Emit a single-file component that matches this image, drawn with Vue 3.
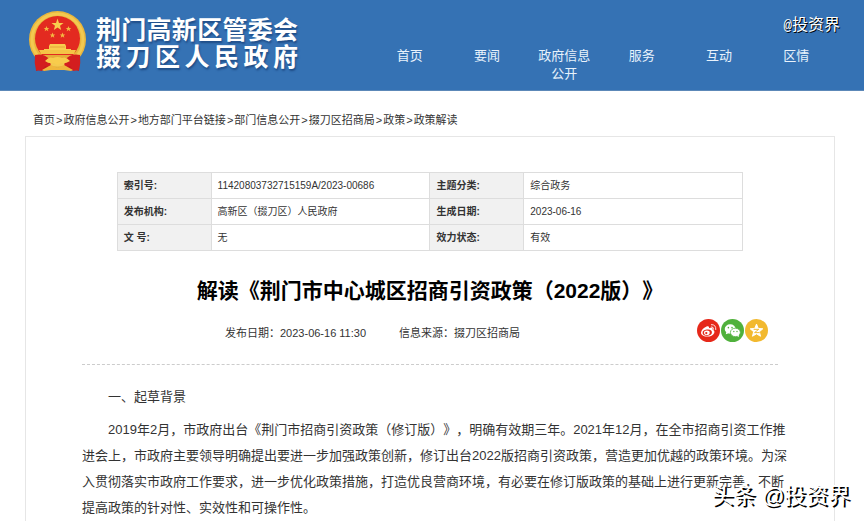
<script setup>
const nav = ['首页', '要闻', '政府信息公开', '服务', '互动', '区情']

const crumbs = [
  '首页',
  '政府信息公开',
  '地方部门平台链接',
  '部门信息公开',
  '掇刀区招商局',
  '政策',
  '政策解读'
]

const records = [
  ['索引号:', '11420803732715159A/2023-00686', '主题分类:', '综合政务'],
  ['发布机构:', '高新区（掇刀区）人民政府', '生成日期:', '2023-06-16'],
  ['文 号:', '无', '效力状态:', '有效']
]

const lines = [
  '2019年2月，市政府出台《荆门市招商引资政策（修订版）》，明确有效期三年。2021年12月，在全市招商引资工作推',
  '进会上，市政府主要领导明确提出要进一步加强政策创新，修订出台2022版招商引资政策，营造更加优越的政策环境。为深',
  '入贯彻落实市政府工作要求，进一步优化政策措施，打造优良营商环境，有必要在修订版政策的基础上进行更新完善，不断',
  '提高政策的针对性、实效性和可操作性。'
]
</script>

<template>
  <div class="page">
    <header class="header">
      <a class="brand" href="#">
        <svg class="emblem" viewBox="0 0 60 62" aria-hidden="true">
          <path d="M8 43 L52 43 L51 61 Q46 59 43 61 L38 57 H22 L17 61 Q13 59 8 61 Z" fill="#c81a1c" />
          <circle cx="29.500" cy="29.500" r="28.500" fill="#e9b63c" />
          <circle cx="29.500" cy="29.500" r="25.500" fill="none" stroke="#f3c950" stroke-width="3" />
          <circle cx="29.500" cy="28.500" r="22.500" fill="#e32a20" />
          <path d="M29.500 8.500 L31 13 H35.500 L32 15.800 L33.200 20 L29.500 17.500 L25.800 20 L27 15.800 L23.500 13 H28 Z" fill="#f8cf4e" />
          <g fill="#f3b942">
            <path id="star" d="M18.500 16 L19.300 18 H21.300 L19.700 19.300 L20.300 21.300 L18.500 20.100 L16.700 21.300 L17.300 19.300 L15.700 18 H17.700 Z" />
            <use href="#star" x="22" />
            <use href="#star" x="6" y="6.500" />
            <use href="#star" x="16" y="6.500" />
          </g>
          <path d="M22 34 H37 L38 36 V39 H43 V42 H16 V39 H21 V36 Z" fill="#f8cf4e" />
          <path d="M22 37 H37" stroke="#e8a43a" stroke-width="1" />
          <path d="M11 40 H48 L46 44 H13 Z" fill="#f4c446" />
          <path d="M9 45 H50 L46 50 H13 Z" fill="#e6ab38" />
          <path d="M7 45 Q16 43 22 50 L23 57 L17 56 L14 61 L8 60 Q6 53 7 45 Z M52 45 Q43 43 37 50 L36 57 L42 56 L45 61 L51 60 Q53 53 52 45 Z" fill="#d31e1f" />
          <path d="M14 60 L23 55 L29.500 58 L36 55 L45 60 L43 61 L36 60 L29.500 60 L23 60 L16 61 Z" fill="#f0b73c" />
          <path d="M17 51 Q21 46 25 48 Q29.500 46 34 48 Q38 46 42 51 Q37 54 34 53 L29.500 55 L25 53 Q21 54 17 51 Z" fill="#f8cc4c" />
        </svg>
        <span class="brand-text">
          <span class="brand-line">荆门高新区管委会</span>
          <span class="brand-line">掇刀区人民政府</span>
        </span>
      </a>
      <nav class="nav">
        <a v-for="item in nav" :key="item" href="#"><span>{{ item }}</span></a>
      </nav>
      <span class="mark mark-top"><span class="at">@</span>投资界</span>
    </header>

    <nav class="crumbs">
      <template v-for="(c, i) in crumbs" :key="i">
        <span v-if="i" class="sep">&gt;</span><a href="#">{{ c }}</a>
      </template>
    </nav>

    <main class="card">
      <table class="info">
        <tbody>
          <tr v-for="r in records" :key="r[0]">
            <th scope="row">{{ r[0] }}</th>
            <td>{{ r[1] }}</td>
            <th scope="row">{{ r[2] }}</th>
            <td>{{ r[3] }}</td>
          </tr>
        </tbody>
      </table>

      <h1>解读《荆门市中心城区招商引资政策（2022版）》</h1>

      <div class="meta">
        <span>发布日期：2023-06-16 11:30</span>
        <span>信息来源：掇刀区招商局</span>
        <div class="share">
          <a href="#" aria-label="微博">
            <svg viewBox="0 0 24 24">
              <circle cx="12" cy="12" r="12" fill="#e6281a" />
              <path d="M9.500 8 C12 7 13 8 12.500 9.700 C15 8.700 17 9.300 16.300 11.300 C18 12 18.500 13 18 14.500 C17 17 13.500 18.500 10.200 18.300 C6.500 18 4 16.300 4.200 14 C4.500 11.500 7 9 9.500 8 Z" fill="#fff" />
              <ellipse cx="10.700" cy="14.200" rx="4.900" ry="3.200" fill="#e6281a" transform="rotate(-8 10.700 14.200)" />
              <ellipse cx="10.300" cy="14.300" rx="3" ry="2.400" fill="#fff" />
              <circle cx="9.700" cy="14.700" r="1.200" fill="#e6281a" />
              <path d="M15 8.200 Q17.500 8 17.300 10.700 M15 5.900 Q20 5.500 19.600 11" fill="none" stroke="#fff" stroke-width="0.900" stroke-linecap="round" />
            </svg>
          </a>
          <a href="#" aria-label="微信">
            <svg viewBox="0 0 24 24">
              <circle cx="12" cy="12" r="12" fill="#50b13c" />
              <path d="M5.500 13.500 L5 16 L8 14.800 Z" fill="#fff" />
              <ellipse cx="9.600" cy="10.400" rx="5.700" ry="4.900" fill="#fff" />
              <ellipse cx="15" cy="14" rx="5.200" ry="4.400" fill="#fff" stroke="#50b13c" stroke-width="0.800" />
              <path d="M16.500 17.500 L18.800 18.900 L18.400 16.500 Z" fill="#fff" />
              <g fill="#50b13c">
                <circle cx="7.700" cy="9" r="0.800" />
                <circle cx="11.500" cy="9" r="0.800" />
                <circle cx="13.400" cy="13" r="0.700" />
                <circle cx="16.700" cy="13" r="0.700" />
              </g>
            </svg>
          </a>
          <a href="#" aria-label="QQ空间">
            <svg viewBox="0 0 24 24">
              <circle cx="12" cy="12" r="12" fill="#f2b92f" />
              <path d="M12 5.300 L13.800 9.800 L18.600 10.200 L15 13.300 L16.200 18 L12 15.500 L7.800 18 L9 13.300 L5.400 10.200 L10.200 9.800 Z" fill="#fff" stroke="#fff" stroke-linejoin="round" />
              <path d="M9 10.800 H14.300 L10 14.200 H15.300" fill="none" stroke="#f2b92f" stroke-width="1" />
            </svg>
          </a>
        </div>
      </div>

      <article class="article">
        <h2>一、起草背景</h2>
        <p><template v-for="(l, i) in lines" :key="i"><br v-if="i">{{ l }}</template></p>
      </article>
    </main>

    <span class="mark mark-bottom">头条 @投资界</span>
  </div>
</template>

<style>
body {
  margin: 0;
  background: #fff;
}
</style>

<style scoped>
.page {
  position: relative;
  display: flex;
  flex-direction: column;
  box-sizing: border-box;
  min-height: 100vh;
  overflow: hidden;
  font-family: "Liberation Sans", "Noto Sans CJK SC", sans-serif;
  color: #333;
  text-spacing-trim: space-all;
}

a {
  color: inherit;
  text-decoration: none;
}

.header {
  position: relative;
  display: flex;
  justify-content: space-between;
  box-sizing: border-box;
  height: 91px;
  padding: 10px 29px 0 28px;
  background: #3572b4;
  border-bottom: 1px solid #5c88b8;
  color: #fff;
}

.brand {
  display: flex;
  gap: 8px;
}

.emblem {
  width: 60px;
  height: 62px;
}

.brand-text {
  width: 202px;
  padding-top: 7px;
  font-size: 25px;
  font-weight: 700;
  line-height: 27px;
  text-shadow: 1px 2px 2px #1f4c86;
}

.brand-line {
  display: block;
  white-space: nowrap;
  text-align: justify;
  text-align-last: justify;
}

.nav {
  display: grid;
  grid-template-columns: repeat(6, 1fr);
  width: 58%;
  max-width: 464px;
  padding-top: 37px;
  color: #e8f2fc;
  font-size: 13px;
  line-height: 18px;
  text-align: center;
}

.nav a {
  display: flex;
  justify-content: center;
}

.nav span {
  max-width: 4em;
}

.mark {
  position: absolute;
  color: #fff;
  white-space: nowrap;
}

.mark-top {
  top: 13px;
  right: 24px;
  font-size: 16px;
  line-height: 24px;
  text-shadow: 1px 1px 0 #000;
}

.at {
  font-family: "Liberation Mono", monospace;
  font-size: 14px;
}

.mark-bottom {
  right: 14px;
  bottom: 9px;
  font-size: 22px;
  line-height: 32px;
  text-shadow: 2px 2px 0 #000;
}

.crumbs {
  display: flex;
  padding: 20px 33px 7px;
  font-size: 11px;
  line-height: 18px;
}

.sep {
  margin: 0 1px;
}

.card {
  flex: 1;
  margin: 0 29px 0 25px;
  padding: 35px 56px 0;
  border: 1px solid #e6e6e6;
  border-bottom: 0;
}

.info {
  width: 90%;
  margin: 0 auto;
  border-collapse: collapse;
  table-layout: fixed;
  font-size: 10px;
  line-height: 15px;
}

.info th,
.info td {
  padding: 5px 6px;
  border: 1px solid #ddd;
  text-align: left;
}

.info th {
  width: 15%;
  box-sizing: border-box;
  background: #f1f1f1;
  font-weight: 700;
}

h1 {
  margin: 25px 0 0;
  color: #000;
  font-size: 21px;
  line-height: 30px;
  text-align: center;
  white-space: nowrap;
}

.meta {
  display: flex;
  gap: 33px;
  height: 58px;
  padding: 0 10px 0 143px;
  border-bottom: 1px dashed #ccc;
  font-size: 11px;
  line-height: 54px;
}

.share {
  display: flex;
  gap: 1px;
  margin-left: auto;
  padding-top: 13px;
}

.share svg {
  display: block;
  width: 23px;
  height: 23px;
}

.article {
  padding-top: 19px;
  font-size: 13px;
  line-height: 26px;
}

.article h2 {
  margin: 0 0 7px;
  font-size: 13px;
  font-weight: 400;
  text-indent: 2em;
}

.article p {
  margin: 0;
  text-indent: 2em;
  white-space: nowrap;
}
</style>
